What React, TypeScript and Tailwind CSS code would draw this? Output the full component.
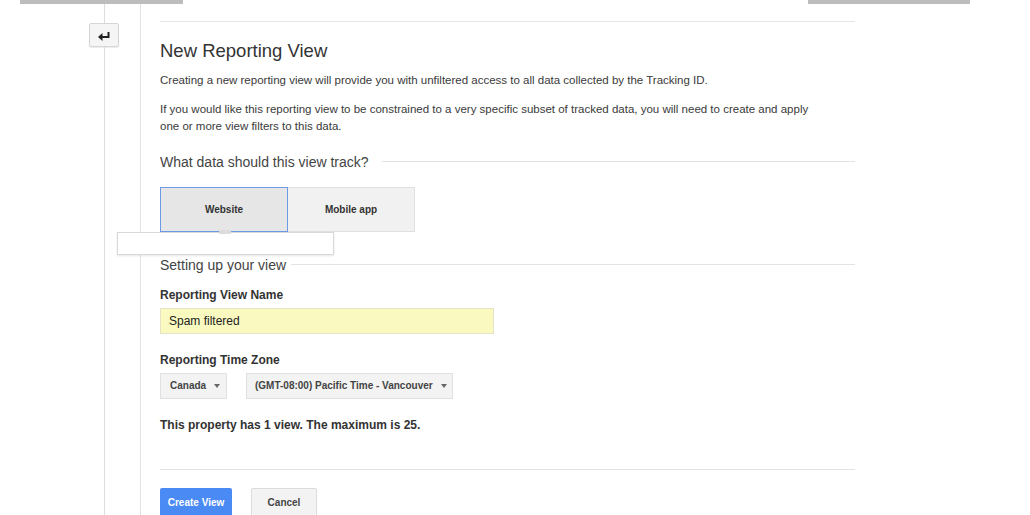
import React from 'react';

function Caret() {
  return <span className="ml-[8px] inline-block h-0 w-0 border-x-[3.5px] border-t-[4px] border-x-transparent border-t-[#666]" />;
}

export default function App() {
  return (
    <div className="relative h-[515px] w-[1030px] overflow-hidden bg-white font-['Liberation_Sans',Arial,sans-serif] text-[#333]">
      <div className="flex h-[4px]">
        <div className="ml-[20px] w-[163px] bg-[#bdbdbd]" />
        <div className="ml-auto mr-[60px] w-[162px] bg-[#bdbdbd]" />
      </div>

      <div className="flex h-[511px]">
        {/* timeline column */}
        <div className="flex w-[140px] shrink-0 justify-end pr-[21px]">
          <div className="flex w-[30px] flex-col items-center">
            <div className="h-[19px] w-px bg-[#ddd]" />
            <button className="flex h-[24px] w-[30px] items-center justify-center rounded-[2px] border border-[#d6d6d6] bg-[#f5f5f5] shadow-[0_1px_1px_rgba(0,0,0,0.08)]">
              <svg width="14" height="11" viewBox="0 0 14 11" fill="none">
                <path d="M1 7 L5.5 3 V11 Z" fill="#222" />
                <path d="M5 7 H11.5 V2" stroke="#222" strokeWidth="2" />
              </svg>
            </button>
            <div className="w-px flex-1 bg-[#ddd]" />
          </div>
        </div>

        {/* content */}
        <div className="w-[715px] border-l border-[#e3e3e3] pl-[19px]">
          <div className="mt-[17px] border-t border-[#e5e5e5]" />
          <h1 className="mt-[18px] text-[18.5px] leading-[22px] text-[#333]">New Reporting View</h1>
          <p className="mt-[10px] text-[11.5px] leading-[17px] text-[#3a3a3a]">
            Creating a new reporting view will provide you with unfiltered access to all data collected by the Tracking ID.
          </p>
          <p className="mt-[12px] max-w-[660px] text-[11.5px] leading-[17px] text-[#3a3a3a]">
            If you would like this reporting view to be constrained to a very specific subset of tracked data, you will need to create and apply one or more view filters to this data.
          </p>

          <div className="mt-[17.5px] flex items-center">
            <span className="text-[14px] leading-[18px] text-[#444]">What data should this view track?</span>
            <div className="ml-[13px] h-px flex-1 bg-[#e3e3e3]" />
          </div>

          <div className="relative mt-[16px] flex h-[45px]">
            <button className="h-[45px] w-[128px] border border-[#6d9ae6] bg-[#e6e6e6] text-[10px] font-bold text-[#333]">
              Website
            </button>
            <button className="h-[45px] w-[127px] border border-l-0 border-[#e0e0e0] bg-[#f1f1f1] text-[10px] font-bold text-[#333]">
              Mobile app
            </button>
            <div className="absolute left-[-43px] top-[45px] h-[23px] w-[217px] border border-[#d9d9d9] bg-white shadow-[0_1px_2px_rgba(0,0,0,0.1)]" />
            <div className="absolute left-[59px] top-[43px] h-[4px] w-[12px] bg-[#dcdcdc]" />
          </div>

          <div className="mt-[24px] flex items-center">
            <span className="text-[14px] leading-[18px] text-[#444]">Setting up your view</span>
            <div className="ml-[5px] h-px flex-1 bg-[#e3e3e3]" />
          </div>

          <div className="mt-[14.5px] text-[12px] font-bold leading-[15px] text-[#333]">Reporting View Name</div>
          <div className="mt-[4.5px] flex h-[26px] w-[334px] items-center border border-[#e4e4c4] bg-[#fafac0] px-[8px] text-[12px] text-[#222]">
            Spam filtered
          </div>

          <div className="mt-[19.5px] text-[12px] font-bold leading-[15px] text-[#333]">Reporting Time Zone</div>
          <div className="mt-[4.5px] flex gap-[19px]">
            <div className="flex h-[26px] w-[67px] items-center border border-[#e0e0e0] bg-[#f3f3f3] pl-[9px] text-[10px] font-bold text-[#444]">
              Canada
              <Caret />
            </div>
            <div className="flex h-[26px] w-[207px] items-center border border-[#e0e0e0] bg-[#f3f3f3] pl-[8px] text-[10px] font-bold text-[#444]">
              (GMT-08:00) Pacific Time - Vancouver
              <Caret />
            </div>
          </div>

          <div className="mt-[19.5px] text-[12px] font-bold leading-[15px] text-[#333]">This property has 1 view. The maximum is 25.</div>

          <div className="mt-[35.5px] border-t border-[#e3e3e3]" />

          <div className="mt-[18px] flex gap-[19px]">
            <button className="h-[30px] w-[72px] rounded-[2px] bg-[#4a8af4] text-[10px] font-bold text-white">Create View</button>
            <button className="h-[30px] w-[66px] rounded-[2px] border border-[#dcdcdc] bg-[#f3f3f3] text-[10px] font-bold text-[#444]">Cancel</button>
          </div>
        </div>
      </div>
    </div>
  );
}
